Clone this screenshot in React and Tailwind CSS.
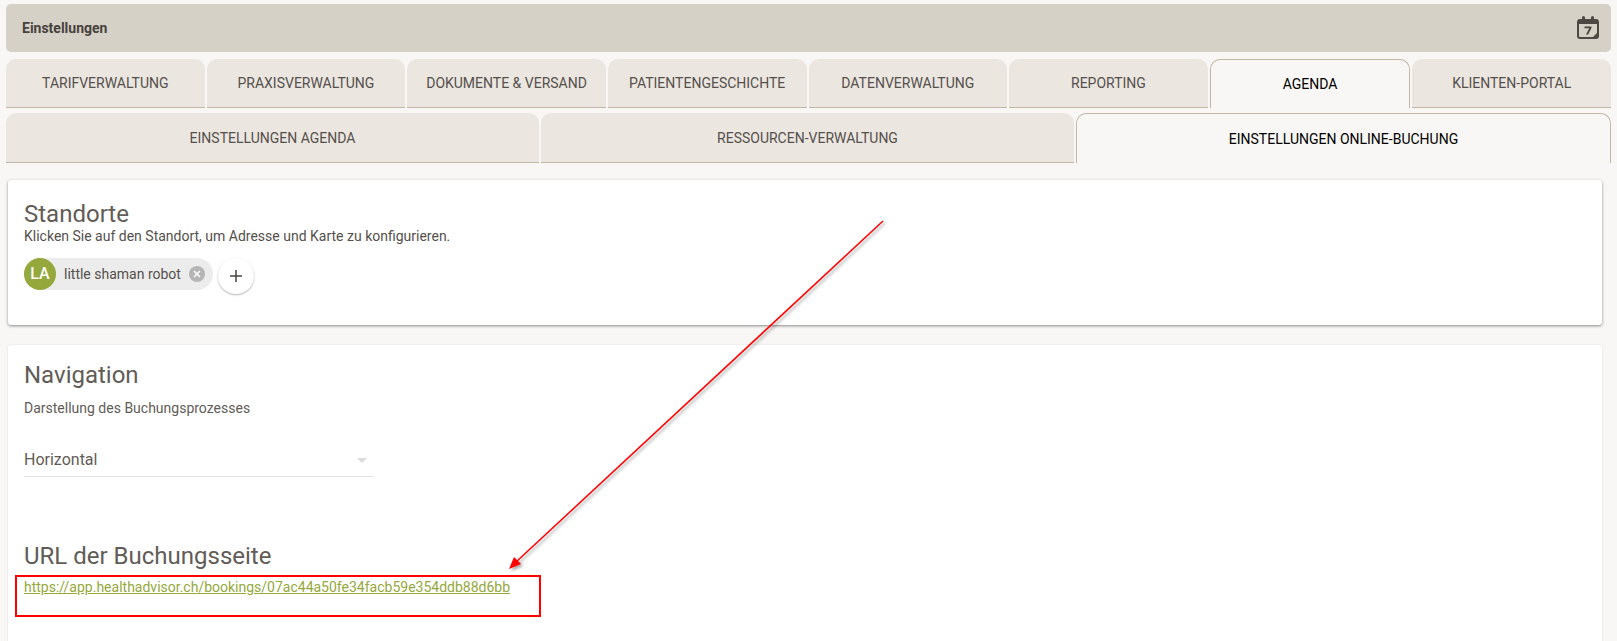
const tabs = ["Tarifverwaltung","Praxisverwaltung","Dokumente & Versand","Patientengeschichte","Datenverwaltung","Reporting","Agenda","Klienten-Portal"];
const subs = ["Einstellungen Agenda","Ressourcen-Verwaltung","Einstellungen Online-Buchung"];

function Tab({ label, active, h }) {
  return (
    <div className={`flex-1 min-w-0 flex items-center justify-center uppercase text-sm rounded-t-[10px] ${h} ${active ? "bg-[#f8f7f5] text-black border border-b-0 border-[#c2b7a5]" : "bg-[#ebe6e0] text-[#55504c] border-b border-[#c2b7a5]"}`}>
      <span className="whitespace-nowrap">{label}</span>
    </div>
  );
}

function Calendar() {
  return (
    <svg width="22" height="24" viewBox="0 0 22 24" className="text-[#4d4843]">
      <path fill="currentColor" fillRule="evenodd" d="M3 3h2V1.5a1.5 1.5 0 0 1 3 0V3h6V1.5a1.5 1.5 0 0 1 3 0V3h2a3 3 0 0 1 3 3v14a3 3 0 0 1-3 3H3a3 3 0 0 1-3-3V6a3 3 0 0 1 3-3Zm-1 5v12a1 1 0 0 0 1 1h13l4-4V8H2Z" />
      <path fill="currentColor" d="M7.5 10.5h7v1.6l-3.4 6.4H9l3.2-6.2H7.5z" />
      <path fill="currentColor" d="M20 18.5 17.5 21H19a1 1 0 0 0 1-1z" />
    </svg>
  );
}

export default function App() {
  return (
    <div className="relative h-[641px] w-full overflow-hidden bg-[#f8f7f5] font-['Roboto',sans-serif] text-[#5f5a55]">
      <div className="pt-1 px-1.5">
        <div className="h-12 rounded-[5px] bg-[#d5d1c6] pl-4 pr-3 flex items-center justify-between">
          <span className="text-sm font-bold text-[#47423e]">Einstellungen</span>
          <Calendar />
        </div>
        <div className="mt-[7px] flex gap-0.5">
          {tabs.map((t) => <Tab key={t} label={t} active={t === "Agenda"} h="h-[49px]" />)}
        </div>
        <div className="mt-[5px] flex gap-0.5">
          {subs.map((t, i) => <Tab key={t} label={t} active={i === 2} h="h-[50px]" />)}
        </div>
      </div>

      <div className="mx-2 mt-[17px] mr-[15px] h-[145px] rounded-[3px] bg-white shadow-[0_1px_3px_rgba(0,0,0,0.45)] pl-4 pt-5">
        <h2 className="text-2xl leading-7 text-[#625c57]">Standorte</h2>
        <p className="text-sm leading-4 text-[#55504c]">Klicken Sie auf den Standort, um Adresse und Karte zu konfigurieren.</p>
        <div className="mt-[14px] flex items-start">
          <div className="flex items-center h-8 rounded-full bg-[#ececec]">
            <div className="w-8 h-8 rounded-full bg-[#95a83c] text-white font-medium text-base flex items-center justify-center">LA</div>
            <span className="ml-2 text-sm text-[#55504c]">little shaman robot</span>
            <span className="ml-2 mr-2 w-4 h-4 rounded-full bg-[#b5b5b5] flex items-center justify-center">
              <svg width="8" height="8" viewBox="0 0 8 8"><path d="M1 1l6 6M7 1l-6 6" stroke="#fff" strokeWidth="1.5" /></svg>
            </span>
          </div>
          <div className="ml-[5px] w-9 h-9 rounded-full bg-white shadow-[0_1px_2px_rgba(0,0,0,0.3)] flex items-center justify-center">
            <svg width="12" height="12" viewBox="0 0 12 12"><path d="M6 0v12M0 6h12" stroke="#47423e" strokeWidth="1.5" /></svg>
          </div>
        </div>
      </div>

      <div className="mx-2 mr-[15px] mt-[20px] h-[400px] rounded-[3px] bg-white shadow-[0_0_2px_rgba(0,0,0,0.12)] pl-4 pt-4">
        <h2 className="text-2xl leading-7 text-[#625c57]">Navigation</h2>
        <p className="mt-[11px] text-sm leading-4 text-[#625c57]">Darstellung des Buchungsprozesses</p>
        <div className="mt-[28px] w-[350px] h-[33px] border-b border-[#e4e4e4] flex items-center justify-between">
          <span className="text-base text-[#625c57]">Horizontal</span>
          <span className="mr-[7px] w-0 h-0 border-x-[5px] border-x-transparent border-t-[5px] border-t-[#dcdcdc]"></span>
        </div>
        <h2 className="mt-[65px] text-2xl leading-7 text-[#625c57]">URL der Buchungsseite</h2>
        <a className="mt-[9px] block text-sm leading-4 text-[#95a83c] underline">https://app.healthadvisor.ch/bookings/07ac44a50fe34facb59e354ddb88d6bb</a>
      </div>

      <div className="absolute left-[15px] top-[575px] w-[526px] h-[42px] border-2 border-[#ff0000]"></div>
      <svg className="absolute inset-0 pointer-events-none" width="1617" height="641">
        <defs>
          <filter id="s" x="-10%" y="-10%" width="120%" height="120%">
            <feDropShadow dx="2" dy="2" stdDeviation="1.5" floodColor="#000" floodOpacity="0.35" />
          </filter>
        </defs>
        <g filter="url(#s)">
          <line x1="883" y1="221" x2="516" y2="562" stroke="#ff0000" strokeWidth="1.5" />
          <polygon points="509,569 514,557 521,564" fill="#ff0000" />
        </g>
      </svg>
    </div>
  );
}
